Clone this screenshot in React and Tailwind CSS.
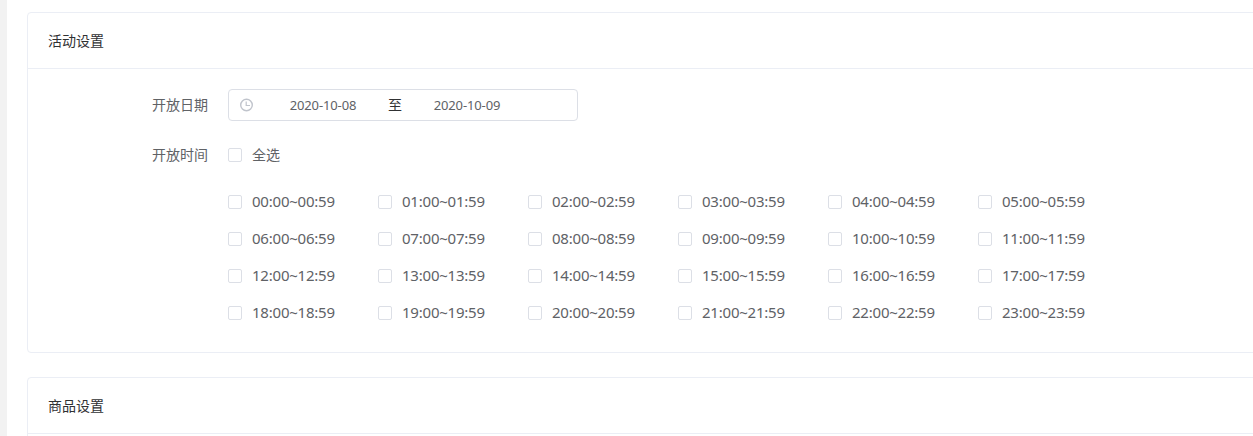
import React, { useState } from 'react';

// One entry per hour: 00:00~00:59 ... 23:00~23:59
const timeSlots = Array.from({ length: 24 }, (_, hour) => {
  const h = String(hour).padStart(2, '0');
  return `${h}:00~${h}:59`;
});

const ClockIcon = () => (
  <svg viewBox="0 0 14 14" className="w-3.5 h-3.5 shrink-0" fill="none" stroke="#c0c4cc" strokeWidth="1.4">
    <circle cx="7.5" cy="7" r="5.8" />
    <path d="M7.2 3.6V7.5H11" strokeWidth="1.2" />
  </svg>
);

const Checkbox = ({ checked, onChange, children }) => (
  <label className="flex items-center cursor-pointer whitespace-nowrap">
    <input
      type="checkbox"
      checked={checked}
      onChange={onChange}
      className="appearance-none shrink-0 w-3.5 h-3.5 border border-[#dcdfe6] rounded-xs bg-white checked:bg-[#409eff] checked:border-[#409eff]"
    />
    <span className="pl-2.5 leading-5">{children}</span>
  </label>
);

const Card = ({ title, className = '', children }) => (
  <section className={`border border-[#ebeef5] rounded bg-white ${className}`}>
    <header className="h-14 px-5 flex items-center text-sm text-[#303133] border-b border-[#ebeef5] box-border">
      {title}
    </header>
    {children}
  </section>
);

const FormRow = ({ label, children }) => (
  <div className="flex items-start">
    <div className="w-40 h-8 shrink-0 text-right text-sm leading-8">{label}</div>
    <div className="ml-5">{children}</div>
  </div>
);

const App = () => {
  const [selected, setSelected] = useState([]);
  const [startDate, setStartDate] = useState('2020-10-08');
  const [endDate, setEndDate] = useState('2020-10-09');

  const allSelected = selected.length === timeSlots.length;

  const toggleSlot = (slot) => {
    setSelected((prev) =>
      prev.includes(slot) ? prev.filter((item) => item !== slot) : [...prev, slot]
    );
  };

  return (
    <div className="h-[436px] overflow-hidden bg-white border-l-[7px] border-[#f2f2f2] pl-5 pt-3 text-[#606266] font-['Noto_Sans','Noto_Sans_CJK_SC',sans-serif]">
      <div className="w-[1300px]">
        <Card title="活动设置" className="h-[341px]">
          <div className="pt-5 flex flex-col gap-[18px] pl-5">
            <FormRow label="开放日期">
              <div className="w-[350px] h-8 flex items-center border border-[#dcdfe6] rounded px-2.5">
                <div className="w-5 shrink-0">
                  <ClockIcon />
                </div>
                <input
                  value={startDate}
                  onChange={(e) => setStartDate(e.target.value)}
                  className="w-32 pt-px text-center text-[13px] tracking-[-0.12px] outline-none"
                />
                <span className="w-4 text-center text-sm text-[#303133]">至</span>
                <input
                  value={endDate}
                  onChange={(e) => setEndDate(e.target.value)}
                  className="w-32 pt-px text-center text-[13px] tracking-[-0.12px] outline-none"
                />
              </div>
            </FormRow>

            <FormRow label="开放时间">
              <div className="h-8 flex items-center text-sm">
                <Checkbox
                  checked={allSelected}
                  onChange={() => setSelected(allSelected ? [] : timeSlots)}
                >
                  全选
                </Checkbox>
              </div>
              <div className="mt-[13px] grid grid-cols-[repeat(6,150px)] gap-y-px text-[15px] tracking-[-0.22px]">
                {timeSlots.map((slot) => (
                  <div key={slot} className="h-9 flex items-center">
                    <Checkbox checked={selected.includes(slot)} onChange={() => toggleSlot(slot)}>
                      <span className="block pb-0.5">{slot}</span>
                    </Checkbox>
                  </div>
                ))}
              </div>
            </FormRow>
          </div>
        </Card>

        <Card title="商品设置" className="mt-6 h-[200px]" />
      </div>
    </div>
  );
};

export default App;
